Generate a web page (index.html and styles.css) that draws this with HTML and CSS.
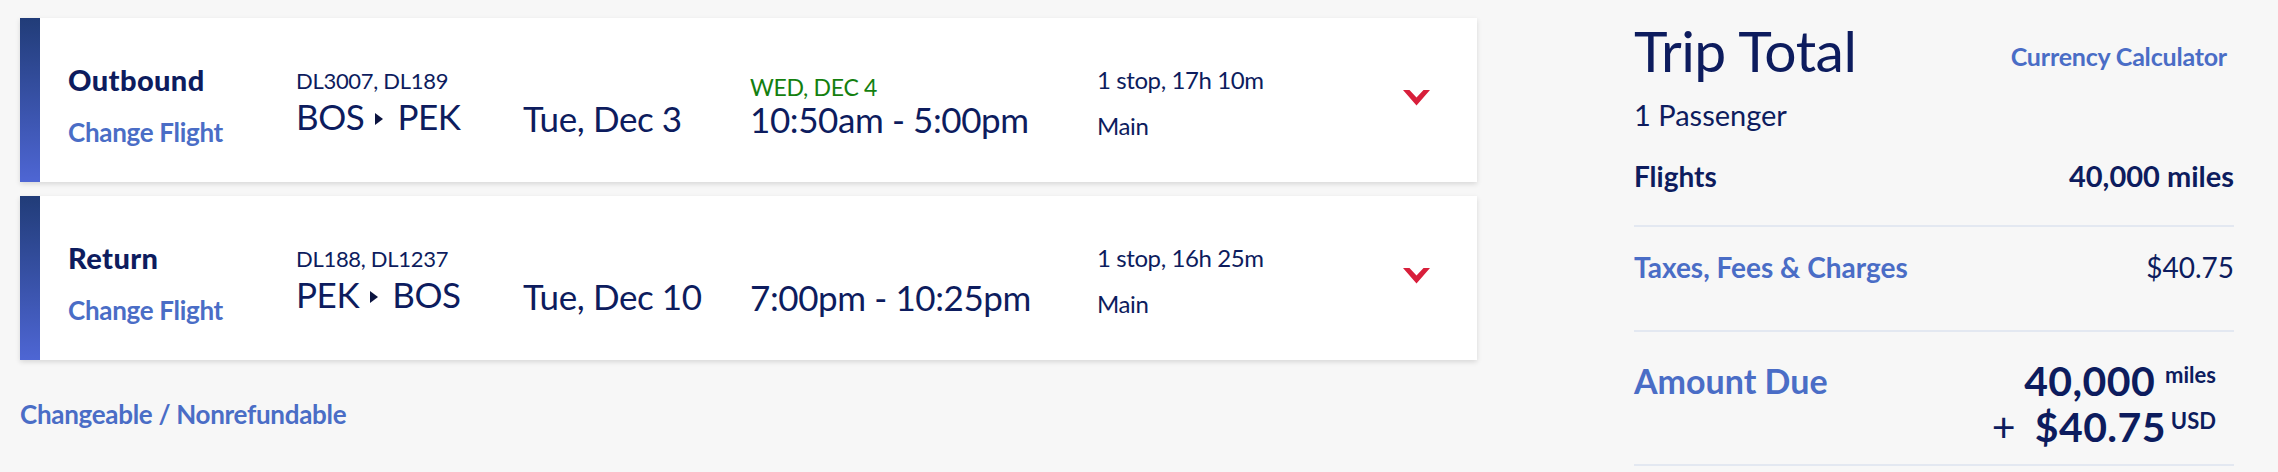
FILE: index.html
```html
<!DOCTYPE html>
<html lang="en">
<head>
  <meta charset="UTF-8" />
  <title>Trip Summary</title>
  <link rel="stylesheet" href="styles.css">
</head>
<body>
  <div class="page">
    <section class="flights">
      <div class="flight">
        <div class="bar"></div>
        <div class="flight-body">
          <div class="leg">
            <div class="leg-title">Outbound</div>
            <a href="#" class="change">Change Flight</a>
          </div>
          <div class="route">
            <div class="flight-no">DL3007, DL189</div>
            <div class="big">BOS<span class="arrow"></span>PEK</div>
          </div>
          <div class="date">
            <div class="big">Tue, Dec 3</div>
          </div>
          <div class="times">
            <div class="arrive-note">WED, DEC 4</div>
            <div class="big">10:50am - 5:00pm</div>
          </div>
          <div class="stops">
            <div>1 stop, 17h 10m</div>
            <div>Main</div>
          </div>
          <button class="toggle" title="Details">
            <svg width="27" height="16" viewBox="0 0 27 16"><polygon points="0,0 6.5,0 13.5,7.5 20.5,0 27,0 13.5,15.5" fill="#d81f3b"/></svg>
          </button>
        </div>
      </div>

      <div class="flight">
        <div class="bar"></div>
        <div class="flight-body">
          <div class="leg">
            <div class="leg-title">Return</div>
            <a href="#" class="change">Change Flight</a>
          </div>
          <div class="route">
            <div class="flight-no">DL188, DL1237</div>
            <div class="big">PEK<span class="arrow"></span>BOS</div>
          </div>
          <div class="date">
            <div class="big">Tue, Dec 10</div>
          </div>
          <div class="times">
            <div class="big">7:00pm - 10:25pm</div>
          </div>
          <div class="stops">
            <div>1 stop, 16h 25m</div>
            <div>Main</div>
          </div>
          <button class="toggle" title="Details">
            <svg width="27" height="16" viewBox="0 0 27 16"><polygon points="0,0 6.5,0 13.5,7.5 20.5,0 27,0 13.5,15.5" fill="#d81f3b"/></svg>
          </button>
        </div>
      </div>

      <a href="#" class="fare-rules">Changeable / Nonrefundable</a>
    </section>

    <aside class="summary">
      <div class="summary-head">
        <h1>Trip Total</h1>
        <a href="#" class="calc">Currency Calculator</a>
      </div>
      <div class="pax">1 Passenger</div>

      <div class="row row-flights">
        <span>Flights</span>
        <span class="num">40,000 miles</span>
      </div>
      <div class="row row-taxes">
        <a href="#">Taxes, Fees &amp; Charges</a>
        <span>$40.75</span>
      </div>
      <div class="row row-due">
        <span class="due-label">Amount Due</span>
        <div class="due-amount">
          <div>40,000<sup>miles</sup></div>
          <div><span class="plus">+</span>$40.75<sup class="usd">USD</sup></div>
        </div>
      </div>
    </aside>
  </div>
</body>
</html>
```

FILE: styles.css
```css
body {
  margin: 0;
  background: #f7f7f7;
  font-family: 'Lato', 'Open Sans', sans-serif;
  color: #0d1c5e;
}

a {
  color: #4a6dc6;
  text-decoration: none;
  font-weight: 700;
}

.page {
  display: flex;
  align-items: flex-start;
  gap: 157px;
  padding: 18px 44px 0 20px;
}

.flights {
  width: 1457px;
  display: flex;
  flex-direction: column;
  gap: 14px;
}

.flight {
  display: flex;
  height: 164px;
  background: #fff;
  box-shadow: 0 2px 5px rgba(0,0,0,0.13);
}

.bar {
  width: 20px;
  background: linear-gradient(180deg, #213c78, #4e66d4);
}

.flight-body {
  display: flex;
  align-items: flex-start;
  padding-left: 28px;
}

.big {
  font-size: 35px;
  line-height: 40px;
  letter-spacing: -0.4px;
  white-space: nowrap;
}

.leg {
  width: 228px;
  padding-top: 46px;
}

.leg-title {
  font-size: 29px;
  line-height: 32px;
  font-weight: 900;
  letter-spacing: 0.4px;
}

.change {
  display: block;
  margin-top: 20px;
  font-size: 26px;
  line-height: 32px;
  letter-spacing: -0.3px;
}

.route {
  width: 227px;
  padding-top: 50px;
}

.flight-no {
  font-size: 22px;
  line-height: 26px;
  letter-spacing: -0.3px;
  margin-bottom: 2px;
}

.arrow {
  display: inline-block;
  margin: 0 14px 4px 11px;
  border-left: 8px solid #0b1440;
  border-top: 6px solid transparent;
  border-bottom: 6px solid transparent;
  vertical-align: middle;
}

.date {
  width: 227px;
  padding-top: 80px;
}

.times {
  width: 347px;
  height: 121px;
  display: flex;
  flex-direction: column;
  justify-content: flex-end;
}

.arrive-note {
  color: #14800f;
  font-size: 23px;
  line-height: 24px;
  letter-spacing: -0.3px;
}

.stops {
  width: 306px;
  padding-top: 39px;
  font-size: 24px;
  line-height: 46px;
  letter-spacing: -0.4px;
}

.toggle {
  align-self: center;
  margin-bottom: 4px;
  padding: 0;
  border: none;
  background: none;
  cursor: pointer;
  line-height: 0;
}

.fare-rules {
  margin-top: 24px;
  font-size: 26px;
  line-height: 32px;
  letter-spacing: -0.3px;
}

.summary {
  width: 600px;
}

.summary-head {
  display: flex;
  justify-content: space-between;
  align-items: flex-start;
}

.summary h1 {
  margin: 0;
  font-size: 57px;
  line-height: 64px;
  font-weight: 400;
  letter-spacing: -0.5px;
}

.calc {
  margin: 23px 7px 0 0;
  font-size: 25px;
  line-height: 30px;
  letter-spacing: -0.2px;
}

.pax {
  margin-top: 16px;
  font-size: 29px;
  line-height: 34px;
}

.row {
  display: flex;
  justify-content: space-between;
  align-items: flex-start;
  font-size: 28px;
  line-height: 34px;
  border-bottom: 2px solid #e3e8f1;
}

.row-flights {
  margin-top: 27px;
  padding-bottom: 32px;
  font-weight: 700;
}

.row-flights .num {
  font-size: 29px;
}

.row-taxes {
  padding: 23px 0 46px;
}

.row-due {
  padding: 26px 0 14px;
}

.due-label {
  color: #4a6dc6;
  font-size: 34px;
  line-height: 46px;
  font-weight: 700;
}

.due-amount {
  padding-right: 18px;
  text-align: right;
  font-size: 41px;
  line-height: 46px;
  font-weight: 700;
  letter-spacing: 0.4px;
}

.due-amount sup {
  font-size: 22px;
  line-height: 1;
  vertical-align: 13px;
  margin-left: 10px;
  letter-spacing: 0;
}

.due-amount .usd {
  margin-left: 5px;
}

.plus {
  font-weight: 400;
  margin-right: 19px;
}
```
